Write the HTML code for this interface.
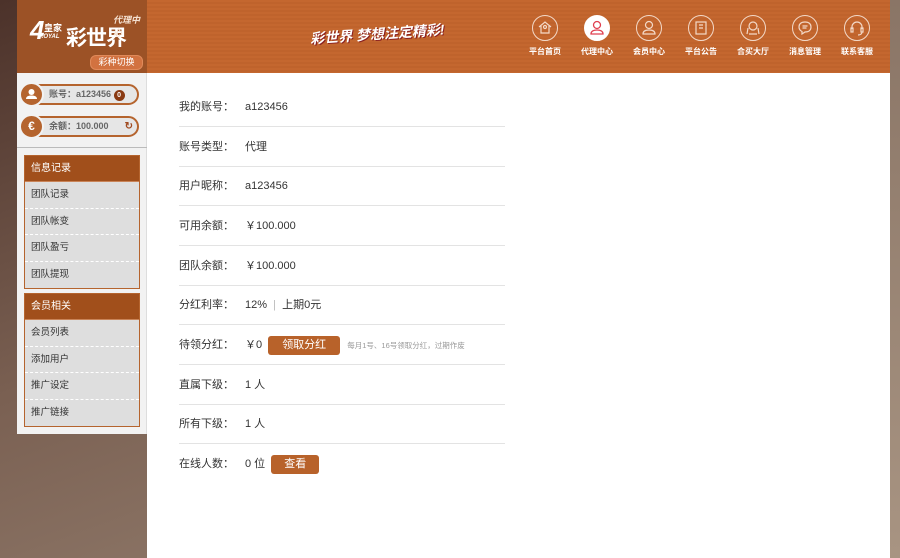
<!DOCTYPE html>
<html><head><meta charset="utf-8">
<style>
*{margin:0;padding:0;box-sizing:border-box}
body{width:900px;height:558px;overflow:hidden;position:relative;font-family:"Liberation Sans","Noto Sans CJK SC",sans-serif;background:linear-gradient(160deg,#4c322a 0%,#7a6052 45%,#9c8878 100%)}
.right{position:absolute;left:890px;top:0;width:10px;height:558px;background:linear-gradient(180deg,#8a7566,#a89482)}
.logo{position:absolute;left:17px;top:0;width:130px;height:73px;background:#9c5226}
.hdr{position:absolute;left:147px;top:0;width:743px;height:73px;background:repeating-linear-gradient(180deg,#c4672f 0 2px,#bf632c 2px 4px)}
.main{position:absolute;left:147px;top:73px;width:743px;height:485px;background:#fff}
.side{position:absolute;left:17px;top:73px;width:130px;height:361px;background:#f2f2f2;border-right:1px solid #ddd}
.pill{position:absolute;left:4px;width:118px;height:21px;border:2px solid #b5642e;border-radius:11px;background:#e6e6e6;font-size:9px;font-weight:bold;color:#666;line-height:17px;padding-left:26px}
.pill .c{position:absolute;left:-4px;top:-4px;width:25px;height:25px;border-radius:50%;background:#b5642e;border:2px solid #f2f2f2}
.grp{position:absolute;left:7px;width:116px;border:1px solid #b5642e;background:#dedede}
.grp .h{height:26px;background:#a14f1b;color:#fff;font-size:10px;line-height:26px;padding-left:6px;border-bottom:1px solid #c98458}
.grp .i{height:26.5px;font-size:9.5px;color:#333;line-height:26px;padding-left:6px;border-bottom:1px dashed #fff}
.grp .i:last-child{border-bottom:none}
.row{position:absolute;left:179px;width:326px;height:40px;border-bottom:1px solid #e3e3e3;font-size:11px;color:#333;line-height:40px}
.row .l{position:absolute;left:0;top:0}
.row .v{position:absolute;left:66px;top:0;white-space:nowrap}
.btn{display:inline-block;vertical-align:middle;background:#b8622a;color:#fff;border-radius:3px;padding:0 12px;height:19px;line-height:19px;font-size:11px}
.ic{position:absolute;top:15px;width:26px;height:26px;border-radius:50%;border:1.3px solid #f3d9c8}
.lab{position:absolute;top:46px;width:60px;text-align:center;font-size:8px;color:#fff;font-weight:bold}
</style></head><body>
<div class="right"></div>
<div class="logo">
 <div style="position:absolute;left:13px;top:17px;color:#fff;font-size:26px;font-weight:bold;font-style:italic;line-height:26px">4</div>
 <div style="position:absolute;left:27px;top:21px;color:#fff;font-size:9px;font-weight:bold">皇家</div>
 <div style="position:absolute;left:22px;top:34px;color:#fff;font-size:6px;font-weight:bold;font-style:italic">ROYAL</div>
 <div style="position:absolute;left:49px;top:22px;color:#fff;font-size:21px;font-weight:bold;letter-spacing:-1px">彩世界</div>
 <div style="position:absolute;left:96px;top:13px;color:#f4e0d0;font-size:9px;font-style:italic;font-weight:bold">代理中心</div>
 <div style="position:absolute;left:73px;top:55px;width:53px;height:15px;border-radius:6px;background:#d27240;border:1px solid #e08a5a;color:#fff;font-size:9px;text-align:center;line-height:13px">彩种切换</div>
</div>
<div class="hdr">
 <div style="position:absolute;left:163px;top:24px;color:#fff;font-size:14px;font-weight:bold;font-style:italic;transform:rotate(-4deg);text-shadow:1px 1px 0 #8a2020">彩世界 梦想注定精彩!</div>
</div>
<div class="ic" style="left:532px"><svg width="24" height="24" viewBox="0 0 24 24" fill="none" stroke="#f3d9c8" stroke-width="1.2"><path d="M6 11l6-5 6 5M8 10v7h8v-7"/><circle cx="12" cy="11" r="1.5"/></svg></div>
<div class="ic" style="left:584px;background:#fff;border-color:#fff"><svg width="24" height="24" viewBox="0 0 24 24" fill="none" stroke="#e04050" stroke-width="1.3"><circle cx="12" cy="9" r="3.5"/><path d="M6 18c0-3 3-4 6-4s6 1 6 4z"/></svg></div>
<div class="ic" style="left:636px"><svg width="24" height="24" viewBox="0 0 24 24" fill="none" stroke="#f3d9c8" stroke-width="1.2"><circle cx="12" cy="9" r="3.5"/><path d="M6 18c0-3 3-4 6-4s6 1 6 4z"/></svg></div>
<div class="ic" style="left:688px"><svg width="24" height="24" viewBox="0 0 24 24" fill="none" stroke="#f3d9c8" stroke-width="1.2"><rect x="7" y="6" width="10" height="12"/><path d="M10 9h4M10 12h4"/></svg></div>
<div class="ic" style="left:740px"><svg width="24" height="24" viewBox="0 0 24 24" fill="none" stroke="#f3d9c8" stroke-width="1.2"><circle cx="12" cy="10" r="4"/><path d="M6 18l1-6M18 18l-1-6M8 18h8"/></svg></div>
<div class="ic" style="left:792px"><svg width="24" height="24" viewBox="0 0 24 24" fill="none" stroke="#f3d9c8" stroke-width="1.2"><path d="M12 6c4 0 6 2 6 5s-2 5-6 5l-3 2v-2.5c-2-1-3-2.5-3-4.5 0-3 2-5 6-5z"/><path d="M9.5 10h5M9.5 12h4"/></svg></div>
<div class="ic" style="left:844px"><svg width="24" height="24" viewBox="0 0 24 24" fill="none" stroke="#f3d9c8" stroke-width="1.2"><path d="M7 13v-2a5 5 0 0 1 10 0v2"/><rect x="6" y="12" width="2" height="4"/><rect x="16" y="12" width="2" height="4"/><path d="M17 16c0 2-2 3-4 3"/></svg></div>
<div class="lab" style="left:515px">平台首页</div>
<div class="lab" style="left:567px">代理中心</div>
<div class="lab" style="left:619px">会员中心</div>
<div class="lab" style="left:671px">平台公告</div>
<div class="lab" style="left:723px">合买大厅</div>
<div class="lab" style="left:775px">消息管理</div>
<div class="lab" style="left:827px">联系客服</div>

<div class="main"></div>
<div class="side">
 <div class="pill" style="top:11px"><span class="c"><svg width="21" height="21" viewBox="0 0 21 21" fill="#fff"><circle cx="10.5" cy="8" r="3"/><path d="M5 15c0-3 3-3.5 5.5-3.5S16 12 16 15z"/></svg></span>账号：a123456 <span style="display:inline-block;width:11px;height:11px;border-radius:50%;background:#8a3a12;color:#fff;font-size:7px;line-height:11px;text-align:center">0</span></div>
 <div class="pill" style="top:43px"><span class="c" style="color:#fff;font-size:12px;text-align:center;line-height:21px">€</span>余额：100.000<span style="position:absolute;right:4px;top:0;color:#a04a20;font-size:10px">↻</span></div>
 <div style="position:absolute;left:0;top:74px;width:130px;border-top:1px solid #bbb"></div>
 <div class="grp" style="top:82px"><div class="h">信息记录</div><div class="i">团队记录</div><div class="i">团队帐变</div><div class="i">团队盈亏</div><div class="i">团队提现</div></div>
 <div class="grp" style="top:220px"><div class="h">会员相关</div><div class="i">会员列表</div><div class="i">添加用户</div><div class="i">推广设定</div><div class="i">推广链接</div></div>
</div>

<div class="row" style="top:87px"><span class="l">我的账号：</span><span class="v">a123456</span></div>
<div class="row" style="top:127px"><span class="l">账号类型：</span><span class="v">代理</span></div>
<div class="row" style="top:166px"><span class="l">用户昵称：</span><span class="v">a123456</span></div>
<div class="row" style="top:206px"><span class="l">可用余额：</span><span class="v">￥100.000</span></div>
<div class="row" style="top:246px"><span class="l">团队余额：</span><span class="v">￥100.000</span></div>
<div class="row" style="top:285px"><span class="l">分红利率：</span><span class="v">12% <span style="color:#bbb">&nbsp;|&nbsp;</span> 上期0元</span></div>
<div class="row" style="top:325px"><span class="l">待领分红：</span><span class="v">￥0 <span class="btn" style="margin-left:3px;padding:0 14px">领取分红</span> <span style="font-size:7.5px;color:#999;margin-left:4px">每月1号、16号领取分红，过期作废</span></span></div>
<div class="row" style="top:365px"><span class="l">直属下级：</span><span class="v">1 人</span></div>
<div class="row" style="top:404px"><span class="l">所有下级：</span><span class="v">1 人</span></div>
<div class="row" style="top:444px;border:none"><span class="l">在线人数：</span><span class="v">0 位 <span class="btn" style="margin-left:3px;padding:0 13px">查看</span></span></div>
</body></html>
